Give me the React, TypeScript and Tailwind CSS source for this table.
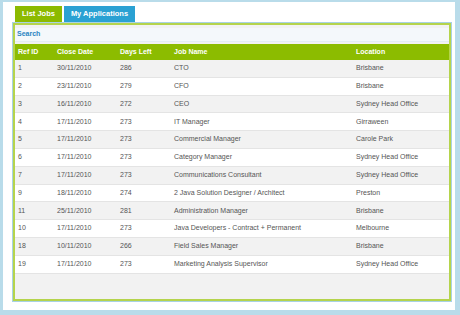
import React from "react";

const rows = [
  ["1", "30/11/2010", "286", "CTO", "Brisbane"],
  ["2", "23/11/2010", "279", "CFO", "Brisbane"],
  ["3", "16/11/2010", "272", "CEO", "Sydney Head Office"],
  ["4", "17/11/2010", "273", "IT Manager", "Girraween"],
  ["5", "17/11/2010", "273", "Commercial Manager", "Carole Park"],
  ["6", "17/11/2010", "273", "Category Manager", "Sydney Head Office"],
  ["7", "17/11/2010", "273", "Communications Consultant", "Sydney Head Office"],
  ["9", "18/11/2010", "274", "2 Java Solution Designer / Architect", "Preston"],
  ["11", "25/11/2010", "281", "Administration Manager", "Brisbane"],
  ["10", "17/11/2010", "273", "Java Developers - Contract + Permanent", "Melbourne"],
  ["18", "10/11/2010", "266", "Field Sales Manager", "Brisbane"],
  ["19", "17/11/2010", "273", "Marketing Analysis Supervisor", "Sydney Head Office"],
];

export default function App() {
  return (
    <div
      className="w-[460px] h-[315px] bg-[#b9dcea] pt-[2px] pl-[3px] pr-[5px] pb-[5px]"
      style={{ fontFamily: '"Liberation Sans", Arial, sans-serif' }}
    >
      <div className="w-full h-full bg-white pt-[4px] pl-[9px] pr-[3px] pb-[8px] flex flex-col">
        <div className="flex gap-[2px] pl-[3px] h-[16px]">
          <div className="w-[47px] h-full bg-[#8cba00] text-white text-[7.5px] font-bold flex items-center justify-center">
            List Jobs
          </div>
          <div className="w-[71px] h-full bg-[#2aa1d3] text-white text-[7.5px] font-bold flex items-center justify-center">
            My Applications
          </div>
        </div>
        <div className="flex-1 border border-[#a9d2e3] flex">
          <div className="flex-1 border-2 border-[#b5d44c] flex flex-col bg-[#f2f2f2]">
            <div className="h-[14px] mt-[3px] bg-[#f4f8fb] flex items-center pl-[2px] text-[7px] font-bold text-[#2a84c2] border-b border-[#e3edf3]">
              Search
            </div>
            <div className="mt-[2px] h-[16px] bg-[#8cbc00] text-white text-[7px] font-bold grid grid-cols-[39px_63px_54px_182px_1fr] items-center pl-[3px]">
              <div>Ref ID</div>
              <div>Close Date</div>
              <div>Days Left</div>
              <div>Job Name</div>
              <div>Location</div>
            </div>
            {rows.map((r, i) => (
              <div
                key={i}
                className={`h-[17.8px] text-[7px] text-[#555555] grid grid-cols-[39px_63px_54px_182px_1fr] items-center pl-[3px] border-b border-[#e4e4e4] ${
                  i % 2 === 0 ? "bg-[#f2f2f2]" : "bg-white"
                }`}
              >
                <div>{r[0]}</div>
                <div>{r[1]}</div>
                <div>{r[2]}</div>
                <div>{r[3]}</div>
                <div>{r[4]}</div>
              </div>
            ))}
            <div className="flex-1 bg-[#f2f2f2]" />
          </div>
        </div>
      </div>
    </div>
  );
}
